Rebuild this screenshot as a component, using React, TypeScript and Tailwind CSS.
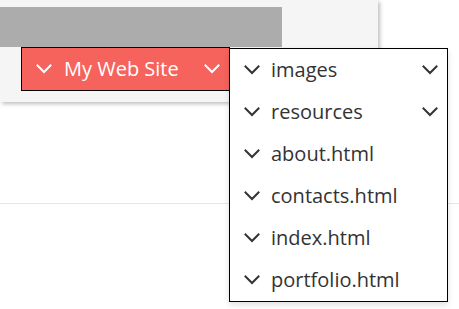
import React from "react";

function Chevron({ className }: { className?: string }) {
  return (
    <svg width="16" height="10" viewBox="0 0 16 10" className={className} fill="none">
      <polyline points="1.5,1.5 8,8 14.5,1.5" stroke="currentColor" strokeWidth="2" strokeLinecap="square" />
    </svg>
  );
}

const items: { name: string; folder: boolean }[] = [
  { name: "images", folder: true },
  { name: "resources", folder: true },
  { name: "about.html", folder: false },
  { name: "contacts.html", folder: false },
  { name: "index.html", folder: false },
  { name: "portfolio.html", folder: false },
];

export default function App() {
  return (
    <div
      className="relative w-full h-[309px] bg-white overflow-hidden"
      style={{ fontFamily: '"Open Sans", "Noto Sans", sans-serif' }}
    >
      <div className="relative z-10 w-[378px] h-[102px] bg-[#f5f5f5] pt-[7px] shadow-[2px_2px_4px_rgba(0,0,0,0.25)]">
        <div className="w-[282px] h-[40px] bg-[#acacac]" />
        <div className="flex items-start ml-[21px] w-[440px]">
          <div className="flex shrink-0 items-center w-[209px] h-[44px] bg-[#f6625c] border border-black text-white pl-[14px] pr-[9px] whitespace-nowrap">
            <Chevron className="shrink-0 text-white" />
            <span className="ml-[12px] text-[20px] leading-none">My Web Site</span>
            <Chevron className="shrink-0 text-white ml-auto" />
          </div>
          <div className="shrink-0 ml-[-1px] mt-[1px] w-[219px] bg-white border border-black shadow-[0_3px_6px_rgba(0,0,0,0.12)]">
            {items.map((it) => (
              <div key={it.name} className="flex items-center h-[42px] pl-[14px] pr-[9px] text-[#333] whitespace-nowrap">
                <Chevron className="shrink-0 text-[#333]" />
                <span className="ml-[11px] text-[20px] leading-none">{it.name}</span>
                {it.folder && <Chevron className="shrink-0 text-[#333] ml-auto" />}
              </div>
            ))}
          </div>
        </div>
      </div>
      <div className="mt-[101px] border-t border-[#e6e6e6]" />
    </div>
  );
}
